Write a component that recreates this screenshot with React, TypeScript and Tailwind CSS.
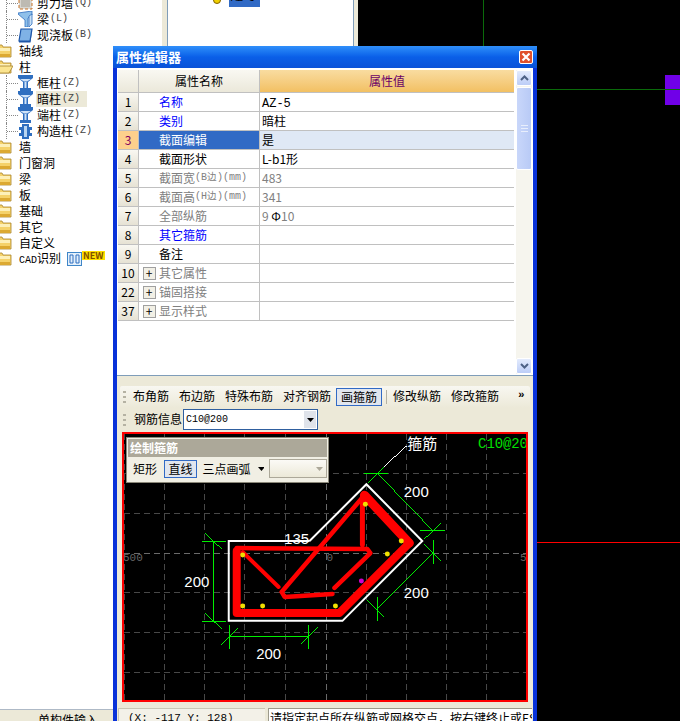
const mono = "[font-family:'Liberation_Mono',monospace] text-[10px]";

const FolderIcon = ({ open }: { open?: boolean }) => (
  <svg width="19" height="14" viewBox="0 0 19 14" className="shrink-0 -ml-[6px]">
    <path d="M1 3 L2 1 H8 L9 3 H17 V13 H1 Z" fill="#f5d26a" stroke="#a8842c" strokeWidth="0.8" />
    <rect x="2" y="4" width="14" height="3" fill="#fdf0b8" />
    <rect x="2" y="10" width="14" height="3" fill="#dca932" />
    {open && <path d="M1 13 L5 6 H19 L15 13 Z" fill="#fbe48f" stroke="#a8842c" strokeWidth="0.8" />}
  </svg>
);

const ColumnIcon = () => (
  <svg width="15" height="16" viewBox="0 0 15 16" className="shrink-0">
    <path d="M0 0 H15 V3 L10 7 V13 H13 V16 H2 V13 H5 V7 L0 3 Z" fill="#2f6fc0" />
    <path d="M2 4 H13 L9 6.5 H6 Z M6.5 7 H8.5 V13 H6.5 Z" fill="#cfe3f8" />
  </svg>
);

const BeamIcon = () => (
  <svg width="15" height="16" viewBox="0 0 15 16" className="shrink-0">
    <path d="M0 2 L14 0 V4 L10 7 V16 H7 V9 L0 3 Z" fill="#8fc0ea" stroke="#2f6fc0" strokeWidth="0.8" />
    <path d="M11 5 L14 3 V13 L11 16 Z" fill="#c9e0f5" stroke="#2f6fc0" strokeWidth="0.8" />
  </svg>
);

const SlabIcon = () => (
  <svg width="15" height="15" viewBox="0 0 15 15" className="shrink-0">
    <path d="M3 1 H14 L12 13 H1 Z" fill="#7fb2e6" stroke="#1d55a8" strokeWidth="1.2" />
    <path d="M1 13 H12 L14 1 V3 L12.5 14.5 H1 Z" fill="#1d55a8" />
  </svg>
);

const WallIcon = () => (
  <svg width="15" height="15" viewBox="0 0 15 15" className="shrink-0">
    <rect x="1" y="0" width="13" height="13" fill="#d8d6d0" stroke="#c8742a" strokeDasharray="3 2" />
    <rect x="3" y="3" width="9" height="8" fill="#bdbab2" />
  </svg>
);

const CrossColumnIcon = () => (
  <svg width="15" height="15" viewBox="0 0 15 15" className="shrink-0">
    <path d="M4 0 H11 V3 H14 V6 H12 V9 H14 V12 H11 V15 H4 V12 H1 V9 H3 V6 H1 V3 H4 Z" fill="#2f6fc0" />
    <path d="M6 2 H9 V13 H6 Z" fill="#b9d6f2" />
  </svg>
);

const TreeLabel = ({ text, hotkey, active }: { text: string; hotkey?: string; active?: boolean }) => (
  <span className={`flex items-center h-[16px] pl-[1px] pr-[7px] ml-[3px] whitespace-nowrap ${active ? "bg-[#ece9d8]" : ""}`}>
    {text}
    {hotkey && <span className={`${mono} text-[#444] ml-[1px]`}>{hotkey}</span>}
  </span>
);

const ChildRow = ({ icon, text, hotkey, active }: { icon: React.ReactNode; text: string; hotkey: string; active?: boolean }) => (
  <div className="flex items-center h-[16px]">
    <div className="w-[12px] h-[16px] ml-[6px] border-l border-dotted border-[#888] flex items-center">
      <div className="w-full border-t border-dotted border-[#888]" />
    </div>
    {icon}
    <TreeLabel text={text} hotkey={hotkey} active={active} />
  </div>
);

const FolderRow = ({ text, open }: { text: string; open?: boolean }) => (
  <div className="flex items-center h-[16px]">
    <FolderIcon open={open} />
    <span className="ml-[6px] whitespace-nowrap">{text}</span>
  </div>
);

const TreePanel = () => (
  <div className="flex flex-col w-[162px] h-full bg-white">
    <div className="flex-1 -mt-[5px] overflow-hidden text-[12px] leading-[16px] text-black">
      <ChildRow icon={<WallIcon />} text="剪力墙" hotkey="(Q)" />
      <ChildRow icon={<BeamIcon />} text="梁" hotkey="(L)" />
      <ChildRow icon={<SlabIcon />} text="现浇板" hotkey="(B)" />
      <FolderRow text="轴线" />
      <FolderRow text="柱" open />
      <ChildRow icon={<ColumnIcon />} text="框柱" hotkey="(Z)" />
      <ChildRow icon={<ColumnIcon />} text="暗柱" hotkey="(Z)" active />
      <ChildRow icon={<ColumnIcon />} text="端柱" hotkey="(Z)" />
      <ChildRow icon={<CrossColumnIcon />} text="构造柱" hotkey="(Z)" />
      <FolderRow text="墙" />
      <FolderRow text="门窗洞" />
      <FolderRow text="梁" />
      <FolderRow text="板" />
      <FolderRow text="基础" />
      <FolderRow text="其它" />
      <FolderRow text="自定义" />
      <div className="flex items-center h-[16px]">
        <FolderIcon />
        <span className="ml-[6px] whitespace-nowrap">
          <span className={mono}>CAD</span>识别
        </span>
        <svg width="15" height="14" viewBox="0 0 15 14" className="ml-[6px] shrink-0">
          <rect x="0.5" y="0.5" width="14" height="13" fill="#e4f0fb" stroke="#3f86c8" />
          <path d="M3 3 H6 V11 H3 Z M9 3 H12 V11 H9 Z" fill="none" stroke="#2f6fc0" />
        </svg>
        <span className="-mt-[8px] h-[9px] leading-[9px] text-[9px] font-bold bg-[#ffe000] text-[#805000] px-[1px]">NEW</span>
      </div>
    </div>
    <div className="h-[12px] shrink-0 overflow-hidden bg-[#ece9d8] border-t border-[#aeb9c6] text-[12px] leading-[12px] pl-[38px] pt-[4px] whitespace-nowrap">
      单构件输入
    </div>
  </div>
);

type Row = { no: string; name: string; value?: React.ReactNode; tone?: "blue" | "gray"; plus?: boolean; selected?: boolean; unit?: string };

const rows: Row[] = [
  { no: "1", name: "名称", value: <span className={mono + " text-[12px]"}>AZ-5</span>, tone: "blue" },
  { no: "2", name: "类别", value: "暗柱", tone: "blue" },
  { no: "3", name: "截面编辑", value: "是", selected: true },
  { no: "4", name: "截面形状", value: <>L-b1形</> },
  { no: "5", name: "截面宽", unit: "(B边)(mm)", value: "483", tone: "gray" },
  { no: "6", name: "截面高", unit: "(H边)(mm)", value: "341", tone: "gray" },
  { no: "7", name: "全部纵筋", value: <>9 <span className="text-black">Φ</span>10</>, tone: "gray" },
  { no: "8", name: "其它箍筋", tone: "blue" },
  { no: "9", name: "备注" },
  { no: "10", name: "其它属性", tone: "gray", plus: true },
  { no: "22", name: "锚固搭接", tone: "gray", plus: true },
  { no: "37", name: "显示样式", tone: "gray", plus: true },
];

const PropertyRow = ({ row }: { row: Row }) => {
  const nameColor = row.tone === "blue" ? "text-[#0000ff]" : row.tone === "gray" ? "text-[#808080]" : "text-black";
  const valueColor = row.tone === "gray" ? "text-[#808080]" : "text-black";
  return (
    <div className="flex h-[19px] border-b border-[#c0c0c0] text-[12px] leading-[18px]">
      <div className={`w-[21px] text-center border-r border-[#c0c0c0] ${row.selected ? "bg-[#fdd08c] text-[#800060]" : "bg-gradient-to-b from-[#f9f8f2] to-[#e6e2d4] text-black"}`}>
        {row.no}
      </div>
      <div className={`flex w-[121px] items-center border-r border-[#c0c0c0] whitespace-nowrap ${row.selected ? "bg-[#316ac5] text-white" : nameColor}`}>
        <div className="w-[20px] shrink-0 flex justify-center">
          {row.plus && (
            <div className="w-[13px] h-[13px] border border-[#a0a0a0] bg-[#f2f0e6] text-black flex items-center justify-center text-[12px] leading-[12px]">+</div>
          )}
        </div>
        {row.name}
        {row.unit && <span className={`${mono} text-[9px]`}>{row.unit}</span>}
      </div>
      <div className={`flex-1 pl-[2px] whitespace-nowrap ${row.selected ? "bg-[#dfe8f5]" : ""} ${valueColor}`}>{row.value}</div>
    </div>
  );
};

const ScrollButton = ({ down }: { down?: boolean }) => (
  <div className="h-[16px] shrink-0 rounded-[2px] border border-white bg-gradient-to-b from-[#e3ebfd] to-[#bccdf7] flex items-center justify-center">
    <svg width="9" height="6" viewBox="0 0 9 6">
      <path d={down ? "M1 1 L4.5 4.5 L8 1" : "M1 5 L4.5 1.5 L8 5"} fill="none" stroke="#4d6185" strokeWidth="2" />
    </svg>
  </div>
);

const PropertyGrid = () => (
  <div className="flex h-[307px] bg-white pt-[2px] pl-[1px] pb-[1px]">
    <div className="w-[396px] shrink-0">
      <div className="flex h-[23px] border-b border-[#c0c0c0] text-[12px] leading-[22px]">
        <div className="w-[21px] border-r border-[#c0c0c0] bg-gradient-to-b from-[#f9f8f2] to-[#ebe8da]" />
        <div className="w-[121px] text-center border-r border-[#c0c0c0] bg-gradient-to-b from-[#f9f8f2] to-[#ebe8da] text-black">属性名称</div>
        <div className="flex-1 text-center bg-gradient-to-b from-[#f9dca0] to-[#f2c062] text-[#6a0068]">属性值</div>
      </div>
      {rows.map((row) => (
        <PropertyRow key={row.no} row={row} />
      ))}
    </div>
    <div className="flex flex-col w-[16px] ml-[2px] bg-[#f6f5ee]">
      <ScrollButton />
      <div className="h-[83px] mt-[1px] rounded-[2px] border border-white bg-gradient-to-r from-[#c9d7fa] to-[#b8caf6] flex items-center justify-center">
        <div className="w-[7px] h-[7px] border-y border-[#e8eefc] flex items-center"><div className="w-full border-t border-[#e8eefc]" /></div>
      </div>
      <div className="flex-1" />
      <ScrollButton down />
    </div>
  </div>
);

const Grip = () => (
  <div className="w-[3px] h-[14px] mx-[2px] shrink-0 flex flex-col justify-between py-[1px]">
    <div className="h-[2px] bg-[#b5b2a3]" />
    <div className="h-[2px] bg-[#b5b2a3]" />
    <div className="h-[2px] bg-[#b5b2a3]" />
  </div>
);

const ToolItem = ({ text, active }: { text: string; active?: boolean }) => (
  <div className={`h-[18px] leading-[16px] whitespace-nowrap ${active ? "px-[4px] border border-[#316ac5] bg-[#e1e6ee]" : "px-[5px]"}`}>{text}</div>
);

const Toolbars = () => (
  <div className="flex flex-col text-[12px] text-black">
    <div className="flex items-center h-[22px] mt-[10px] mx-[3px] pl-[1px] rounded-[2px] bg-gradient-to-b from-[#f8f7f1] to-[#ece9d8]">
      <Grip />
      <ToolItem text="布角筋" />
      <ToolItem text="布边筋" />
      <ToolItem text="特殊布筋" />
      <ToolItem text="对齐钢筋" />
      <ToolItem text="画箍筋" active />
      <div className="w-px h-[14px] bg-[#b5b2a3] mx-[4px]" />
      <div className="-ml-[3px] flex">
        <ToolItem text="修改纵筋" />
        <ToolItem text="修改箍筋" />
      </div>
      <span className={`${mono} font-bold ml-[14px] -mt-[4px] text-[11px]`}>»</span>
    </div>
    <div className="flex items-center h-[23px] mx-[3px] pl-[1px]">
      <Grip />
      <span className="ml-[6px] -mt-[1px] whitespace-nowrap">钢筋信息</span>
      <div className="flex items-center w-[135px] h-[21px] ml-[1px] border border-[#2f5f9f] bg-white pl-[2px] pr-[1px]">
        <span className={`${mono} flex-1`}>C10@200</span>
        <div className="w-[12px] h-[17px] bg-[#dfe3ea] flex items-center justify-center">
          <svg width="7" height="4" viewBox="0 0 7 4"><path d="M0 0 H7 L3.5 4 Z" fill="#000" /></svg>
        </div>
      </div>
    </div>
  </div>
);

const gridX = [125, 165, 205, 245, 286, 327, 367, 407, 447, 487, 527];
const gridY = [473, 513, 553, 593, 633, 673];
const yellowDots = [[243, 555], [243, 606], [263, 606], [336, 606], [366, 504], [402, 541], [388, 554]];
const greenLines = [
  "M202 541 H226", "M205 533 L222 549", "M214 541 V622", "M202 622 H226", "M205 613 L222 629",
  "M230 637 H309", "M230 625 V649", "M309 625 V649", "M221 645 L238 628", "M301 645 L318 628",
  "M365 473 H389", "M368 483 L385 466", "M378 473 L433 530", "M421 530 H446", "M425 539 L442 523",
  "M434 540 V564", "M425 544 L442 561", "M434 553 L378 609", "M378 597 V621", "M368 600 L385 617",
];

const RebarDrawing = () => (
  <svg viewBox="124 434 403 266" className="w-full h-full block bg-black">
    {gridX.map((x) => (
      <path key={x} d={`M${x} 434 V700`} stroke={x === 327 ? "#6a6a6a" : "#484848"} strokeDasharray="6 4" shapeRendering="crispEdges" />
    ))}
    {gridY.map((y) => (
      <path key={y} d={`M124 ${y} H527`} stroke={y === 553 ? "#6a6a6a" : "#484848"} strokeDasharray="6 4" shapeRendering="crispEdges" />
    ))}
    {greenLines.map((d) => (
      <path key={d} d={d} stroke="#00f000" fill="none" shapeRendering="crispEdges" />
    ))}
    <path d="M385 466 L408 445" stroke="#fff" shapeRendering="crispEdges" />
    <path d="M310 541 H229 V621 H343 L423 541 L367 484 L310 541" fill="none" stroke="#fff" strokeWidth="2" />
    <g fill="none" stroke="#f00" strokeLinejoin="round" strokeLinecap="round">
      <path d="M237 551 V613 H340 L410 543" strokeWidth="8" />
      <path d="M410 543 L365 495" strokeWidth="9" />
      <path d="M365 495 L282 592 L285 597 L333 594" strokeWidth="4.5" />
      <path d="M363 497 V545" strokeWidth="5" />
      <path d="M237 548 L368 549 L371 553 L335 588" strokeWidth="4.5" />
      <path d="M243 552 L279 587" strokeWidth="4" />
    </g>
    {yellowDots.map(([x, y]) => (
      <circle key={`${x}-${y}`} cx={x} cy={y} r="2.5" fill="#f0e000" />
    ))}
    <circle cx="362" cy="581" r="2.5" fill="#d000d0" />
    <g fontFamily="'Liberation Sans', sans-serif" fontSize="15" fill="#fff" textAnchor="middle">
      <text x="297" y="544">135</text>
      <text x="197" y="587">200</text>
      <text x="269" y="659">200</text>
      <text x="417" y="497">200</text>
      <text x="417" y="598">200</text>
    </g>
    <text x="423" y="449" textAnchor="middle" fontSize="15" fill="#fff" fontFamily="'Noto Sans CJK SC', sans-serif">箍筋</text>
    <text x="479" y="448" fontSize="14" fill="#00e000" fontFamily="'Liberation Mono', monospace" textLength="50">C10@20</text>
    <g fontFamily="'Liberation Mono', monospace" fontSize="11" fill="#666">
      <text x="123" y="561">500</text>
      <text x="327" y="561">0</text>
      <text x="521" y="561">5</text>
    </g>
  </svg>
);

const DrawPalette = () => (
  <div className="absolute left-[2px] top-[3px] w-[203px] h-[46px] bg-[#f1efe4] border border-[#8a8778] p-[1px] text-[12px] text-black">
    <div className="h-[18px] bg-[#aca899] text-white font-bold text-[12px] leading-[18px] pl-[2px]">绘制箍筋</div>
    <div className="flex items-center h-[23px]">
      <span className="ml-[5px] w-[31px] whitespace-nowrap">矩形</span>
      <div className="w-[34px] h-[18px] leading-[16px] text-center border border-[#316ac5] bg-[#e1e6ee]">直线</div>
      <span className="ml-[5px] whitespace-nowrap">三点画弧</span>
      <svg width="7" height="4" viewBox="0 0 7 4" className="ml-[7px]"><path d="M0 0 H7 L3.5 4 Z" fill="#000" /></svg>
      <div className="flex items-center justify-end w-[58px] h-[19px] ml-[5px] border border-[#aca899] bg-gradient-to-b from-[#fbfaf6] to-[#ece9d8] pr-[3px]">
        <svg width="7" height="4" viewBox="0 0 7 4"><path d="M0 0 H7 L3.5 4 Z" fill="#aca899" /></svg>
      </div>
    </div>
  </div>
);

const StatusBar = () => (
  <div className="flex flex-1 min-h-0 mt-[6px] mx-[1px] gap-[3px] overflow-hidden text-[12px] leading-[12px] text-black whitespace-nowrap">
    <div className={`${mono} text-[11px] w-[147px] shrink-0 bg-[#f3f1e8] border-t border-l border-[#c9c6b5] pt-[3px] pl-[9px]`}>
      (X: -117 Y: 128)
    </div>
    <div className="flex-1 overflow-hidden bg-white border-t border-l border-[#9c9a8c] pt-[3px] pl-[1px]">
      请指定起点所在纵筋或网格交点，按右键终止或ESC
    </div>
  </div>
);

const PropertyDialog = () => (
  <div className="absolute left-[113px] top-[46px] w-[424px] h-[675px] flex flex-col bg-gradient-to-r from-[#0831d9] via-[#0a5be0] to-[#0831d9] rounded-t-[2px] [font-family:'Noto_Sans_CJK_SC',sans-serif]">
    <div className="flex items-center justify-between h-[22px] shrink-0 pl-[3px] pr-[4px] bg-gradient-to-b from-[#2f8ffa] via-[#0a5fe8] to-[#0a52d8]">
      <span className="text-white font-bold text-[13px] leading-[22px]">属性编辑器</span>
      <div className="w-[14px] h-[14px] rounded-[2px] border border-white bg-[#e0512c] flex items-center justify-center">
        <svg width="10" height="10" viewBox="0 0 10 10"><path d="M1.5 1.5 L8.5 8.5 M8.5 1.5 L1.5 8.5" stroke="#fff" strokeWidth="2.2" /></svg>
      </div>
    </div>
    <div className="flex flex-col flex-1 min-h-0 mx-[4px] bg-[#ece9d8]">
      <PropertyGrid />
      <div className="border-t border-[#7f9db9]" />
      <Toolbars />
      <div className="relative h-[270px] mx-[5px] mt-[1px] shrink-0 border-2 border-[#f00]">
        <RebarDrawing />
        <DrawPalette />
      </div>
      <StatusBar />
    </div>
  </div>
);

const App = () => (
  <div className="relative flex w-[680px] h-[721px] overflow-hidden bg-black [font-family:'Noto_Sans_CJK_SC',sans-serif]">
    <TreePanel />
    <div className="w-[6px] bg-[#ece9d8] border-r border-[#7f9db9]" />
    <div className="relative w-[186px] overflow-hidden bg-white border-r border-[#7f9db9]">
      <div className="absolute left-[45px] -top-[2px] w-[8px] h-[6px] rounded-b-full bg-[#f0d000] border border-[#806000]" />
      <div className="absolute left-[61px] top-0 w-[31px] h-[7px] overflow-hidden bg-[#316ac5] text-[12px] leading-[12px] pl-[2px] -mt-0">
        <div className={`${mono} text-black -mt-[7px]`}>AZ-5</div>
      </div>
    </div>
    <div className="w-[4px] bg-[#ece9d8]" />
    <svg viewBox="358 0 322 721" className="flex-1 h-full block" shapeRendering="crispEdges">
      <path d="M483.5 0 V46" stroke="#0a6a0a" />
      <path d="M536 89.5 H680" stroke="#0a6a0a" />
      <path d="M536 542.5 H680" stroke="#f00" />
      <rect x="665" y="75" width="15" height="30" fill="#7000e8" />
      <path d="M665 89.5 H680" stroke="#0a6a0a" />
    </svg>
    <PropertyDialog />
  </div>
);

export default App;
